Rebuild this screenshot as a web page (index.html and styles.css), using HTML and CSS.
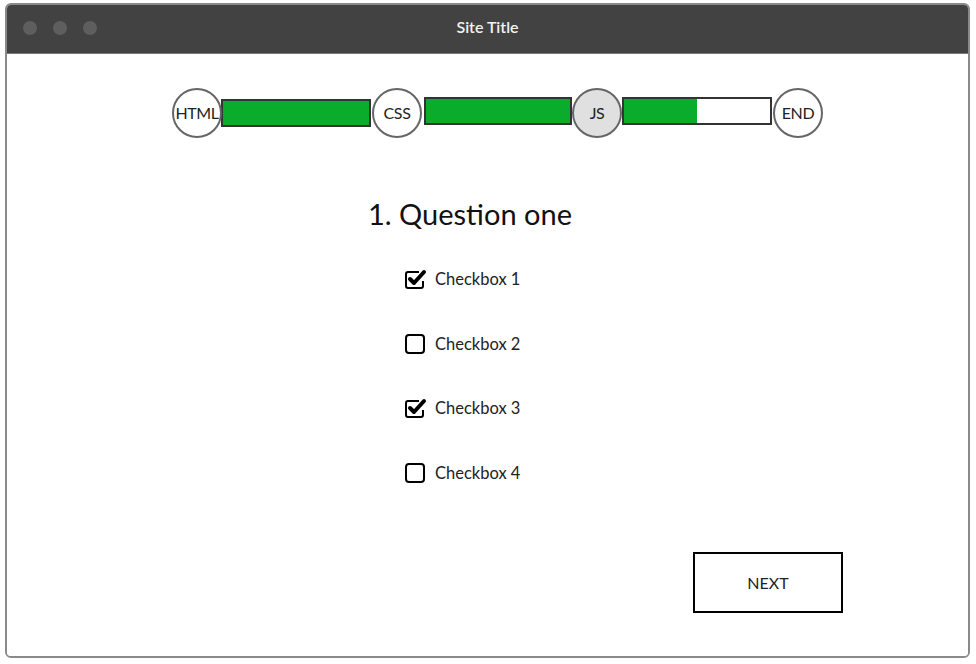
FILE: index.html
```html
<!DOCTYPE html>
<html>
<head>
<meta charset="utf-8">
<link rel="stylesheet" href="styles.css">
</head>
<body>
<div class="window">
  <div class="titlebar">
    <div class="dots"><span class="dot"></span><span class="dot"></span><span class="dot"></span></div>
    <div class="title">Site Title</div>
  </div>
  <div class="content">
    <div class="progress">
      <div class="step">HTML</div>
      <div class="bar bar-1"><div class="fill" style="width:100%"></div></div>
      <div class="step step-2">CSS</div>
      <div class="bar bar-2"><div class="fill" style="width:100%"></div></div>
      <div class="step current">JS</div>
      <div class="bar bar-3"><div class="fill" style="width:50%"></div></div>
      <div class="step step-4">END</div>
    </div>
    <h1 class="question">1. Question one</h1>
    <ul class="options">
      <li class="option">
        <svg class="cb" width="24" height="22" viewBox="0 0 24 22"><path d="M15 4 H4 Q2 4 2 6 V18 Q2 20 4 20 H17 Q19 20 19 18 V13" fill="none" stroke="#000" stroke-width="2"/><path d="M6 11 L10 15 L20 4" fill="none" stroke="#000" stroke-width="4" stroke-linecap="round" stroke-linejoin="round"/></svg>
        <span>Checkbox 1</span>
      </li>
      <li class="option">
        <svg class="cb" width="24" height="22" viewBox="0 0 24 22"><rect x="2" y="2" width="18" height="18" rx="3" fill="none" stroke="#000" stroke-width="2"/></svg>
        <span>Checkbox 2</span>
      </li>
      <li class="option">
        <svg class="cb" width="24" height="22" viewBox="0 0 24 22"><path d="M15 4 H4 Q2 4 2 6 V18 Q2 20 4 20 H17 Q19 20 19 18 V13" fill="none" stroke="#000" stroke-width="2"/><path d="M6 11 L10 15 L20 4" fill="none" stroke="#000" stroke-width="4" stroke-linecap="round" stroke-linejoin="round"/></svg>
        <span>Checkbox 3</span>
      </li>
      <li class="option">
        <svg class="cb" width="24" height="22" viewBox="0 0 24 22"><rect x="2" y="2" width="18" height="18" rx="3" fill="none" stroke="#000" stroke-width="2"/></svg>
        <span>Checkbox 4</span>
      </li>
    </ul>
    <div class="actions">
      <button class="next">NEXT</button>
    </div>
  </div>
</div>
</body>
</html>
```
FILE: styles.css
```css
html, body {
  margin: 0;
  padding: 0;
  background: #fff;
}
body {
  font-family: "Source Sans Pro", Lato, "Open Sans", sans-serif;
  color: #222;
  padding: 3px 6px 6px 5px;
}
.window {
  width: 961px;
  height: 651px;
  border: 2px solid #8a8a8a;
  border-radius: 6px;
  overflow: hidden;
  display: flex;
  flex-direction: column;
}
.titlebar {
  height: 48px;
  background: #424242;
  display: flex;
  align-items: center;
  position: relative;
  border-bottom: 1px solid #777;
}
.dots {
  display: flex;
  gap: 16px;
  padding-left: 16px;
  margin-top: -3px;
}
.dot {
  width: 14px;
  height: 14px;
  border-radius: 50%;
  background: #5e5e5e;
}
.title {
  position: absolute;
  left: 0;
  right: 0;
  top: 12px;
  text-align: center;
  color: #f2f2f2;
  font-size: 16px;
  font-weight: 600;
}
.content {
  flex: 1;
  display: flex;
  flex-direction: column;
  background: #fff;
}
.progress {
  display: flex;
  align-items: center;
  margin: 34px 0 0 165px;
}
.step {
  width: 46px;
  height: 46px;
  border: 2px solid #666;
  border-radius: 50%;
  background: #fff;
  display: flex;
  align-items: center;
  justify-content: center;
  font-size: 16px;
  letter-spacing: -0.4px;
  color: #222;
  flex: none;
  position: relative;
  z-index: 1;
  line-height: 1;
  padding-bottom: 1px;
  box-sizing: content-box;
  height: 45px;
}
.step.current {
  background: #e0e0e0;
}
.step-2 {
  margin-left: 1px;
}
.step-4 {
  margin-left: 1px;
}
.bar {
  height: 24px;
  border: 2px solid #333;
  background: #fff;
  margin-top: -4px;
  flex: none;
}
.bar-1 {
  width: 146px;
  margin: 0 0 0 -1px;
}
.bar-2 {
  width: 144px;
  margin-left: 2px;
}
.bar-3 {
  width: 146px;
}
.fill {
  height: 100%;
  background: #0aad2b;
}
.question {
  margin: 58px 0 0 0;
  padding-left: 361px;
  font-size: 29px;
  font-weight: 400;
  color: #111;
  line-height: 36px;
}
.options {
  list-style: none;
  margin: 36px 0 0 0;
  padding: 0 0 0 397px;
  display: flex;
  flex-direction: column;
  gap: 42.5px;
}
.option {
  display: flex;
  align-items: center;
  gap: 7px;
  height: 22px;
  font-size: 16.5px;
  color: #222;
}
.cb {
  display: block;
  flex: none;
}
.actions {
  display: flex;
  justify-content: flex-end;
  padding-right: 125px;
  margin-top: 68px;
}
.next {
  width: 150px;
  height: 61px;
  border: 2px solid #000;
  background: #fff;
  font-family: inherit;
  font-size: 16px;
  color: #222;
  border-radius: 0;
}
```
